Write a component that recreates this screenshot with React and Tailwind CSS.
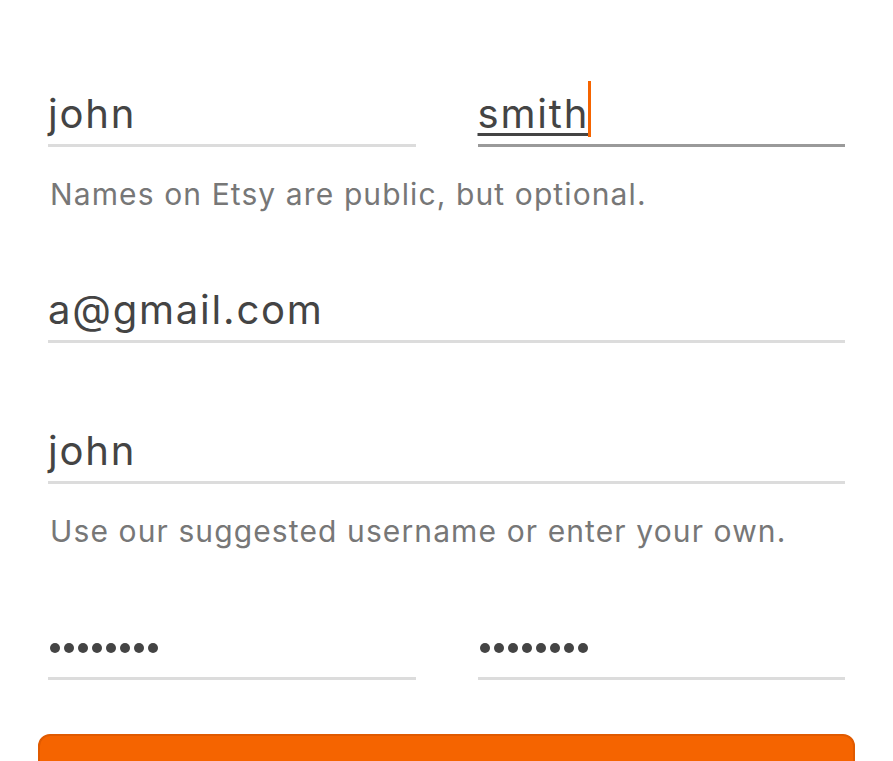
function Field({ children, focused }) {
  return (
    <div
      className={
        "h-[66px] flex items-end pb-[10px] border-b-[3px] " +
        (focused ? "border-[#9a9a9a]" : "border-[#dcdcdc]")
      }
    >
      {children}
    </div>
  );
}

function Dots({ n }) {
  return (
    <div className="flex gap-[4px] mb-[14px] ml-[2px]">
      {Array.from({ length: n }).map((_, i) => (
        <span key={i} className="w-[10px] h-[10px] rounded-full bg-[#444]" />
      ))}
    </div>
  );
}

export default function App() {
  return (
    <div
      className="bg-white px-[48px] pt-[81px] overflow-hidden h-[761px]"
      style={{ fontFamily: "Inter, Roboto, sans-serif" }}
    >
      <div className="grid grid-cols-2 gap-x-[62px]">
        <Field>
          <span className="text-[40px] leading-none tracking-[0.045em] text-[#444]">john</span>
        </Field>
        <Field focused>
          <span className="text-[40px] leading-none tracking-[0.045em] text-[#444] underline decoration-[3px] underline-offset-[5px] decoration-[#444]">
            smith
          </span>
          <span className="w-[3px] h-[56px] bg-[#f56400] self-end -mb-[3px] -ml-[1px]" />
        </Field>
      </div>
      <p className="mt-[32px] text-[30px] leading-none tracking-[0.037em] text-[#777] ml-[2px]">
        Names on Etsy are public, but optional.
      </p>

      <div className="mt-[68px]">
        <Field>
          <span className="text-[40px] leading-none tracking-[0.045em] text-[#444]">a@gmail.com</span>
        </Field>
      </div>

      <div className="mt-[75px]">
        <Field>
          <span className="text-[40px] leading-none tracking-[0.045em] text-[#444]">john</span>
        </Field>
      </div>
      <p className="mt-[32px] text-[30px] leading-none tracking-[0.037em] text-[#777] ml-[2px]">
        Use our suggested username or enter your own.
      </p>

      <div className="grid grid-cols-2 gap-x-[62px] mt-[68px]">
        <Field>
          <Dots n={8} />
        </Field>
        <Field>
          <Dots n={8} />
        </Field>
      </div>

      <button className="block mt-[54px] -mx-[10px] w-[calc(100%+20px)] h-[80px] rounded-[12px] bg-[#f56400] border-2 border-[#e05a00]" />
    </div>
  );
}
